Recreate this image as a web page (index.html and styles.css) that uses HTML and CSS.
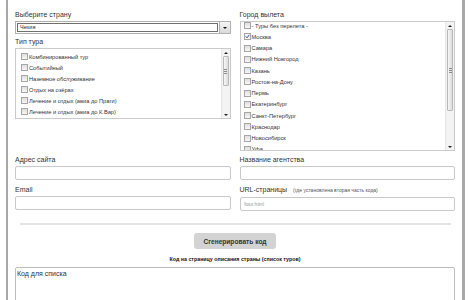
FILE: index.html
```html
<!DOCTYPE html>
<html lang="ru">
<head>
    <meta charset="UTF-8">
    <meta name="viewport" content="width=device-width, initial-scale=1.0">
    <title>Генератор кода</title>
    <link rel="stylesheet" href="styles.css">
</head>
<body>
    <div class="page">
        <!-- Country, tour type and departure city -->
        <div class="cols">
            <div class="col">
                <div class="label">Выберите страну</div>
                <div class="select">
                    <span class="select-value">Чехия</span>
                    <span class="select-btn">
                        <svg width="4" height="2" viewBox="0 0 4 2"><path d="M0 0H4L2 2Z" fill="#111"/></svg>
                    </span>
                </div>

                <div class="label label-gap">Тип тура</div>
                <div class="listbox listbox-types">
                    <ul class="items">
                        <li><span class="cb"></span>Комбинированный тур</li>
                        <li><span class="cb"></span>Событийный</li>
                        <li><span class="cb"></span>Наземное обслуживание</li>
                        <li><span class="cb"></span>Отдых на озёрах</li>
                        <li><span class="cb"></span>Лечение и отдых (авиа до Праги)</li>
                        <li><span class="cb"></span>Лечение и отдых (авиа до К.Вар)</li>
                    </ul>
                    <div class="sb">
                        <span class="sb-btn"><svg width="4" height="2" viewBox="0 0 4 2"><path d="M0 2H4L2 0Z" fill="#222"/></svg></span>
                        <span class="sb-thumb thumb-types"><span class="grip"></span></span>
                        <span class="sb-track"></span>
                        <span class="sb-btn"><svg width="4" height="2" viewBox="0 0 4 2"><path d="M0 0H4L2 2Z" fill="#222"/></svg></span>
                    </div>
                </div>
            </div>

            <div class="col">
                <div class="label">Город вылета</div>
                <div class="listbox listbox-cities">
                    <ul class="items">
                        <li><span class="cb"></span>- Туры без перелета -</li>
                        <li><span class="cb checked"><svg width="5" height="5" viewBox="0 0 5 5"><path d="M0.8 2.4L2 3.8L4.3 0.9" fill="none" stroke="#2b4f96" stroke-width="1"/></svg></span>Москва</li>
                        <li><span class="cb"></span>Самара</li>
                        <li><span class="cb"></span>Нижний Новгород</li>
                        <li><span class="cb"></span>Казань</li>
                        <li><span class="cb"></span>Ростов-на-Дону</li>
                        <li><span class="cb"></span>Пермь</li>
                        <li><span class="cb"></span>Екатеринбург</li>
                        <li><span class="cb"></span>Санкт-Петербург</li>
                        <li><span class="cb"></span>Краснодар</li>
                        <li><span class="cb"></span>Новосибирск</li>
                        <li><span class="cb"></span>Уфа</li>
                    </ul>
                    <div class="sb">
                        <span class="sb-btn"><svg width="4" height="2" viewBox="0 0 4 2"><path d="M0 2H4L2 0Z" fill="#222"/></svg></span>
                        <span class="sb-thumb thumb-cities"><span class="grip"></span></span>
                        <span class="sb-track"></span>
                        <span class="sb-btn"><svg width="4" height="2" viewBox="0 0 4 2"><path d="M0 0H4L2 2Z" fill="#222"/></svg></span>
                    </div>
                </div>
            </div>
        </div>

        <!-- Agency details -->
        <div class="fields">
            <div class="field">
                <div class="label">Адрес сайта</div>
                <input class="input" type="text">
            </div>
            <div class="field">
                <div class="label">Название агентства</div>
                <input class="input" type="text">
            </div>
            <div class="field">
                <div class="label">Email</div>
                <input class="input" type="text">
            </div>
            <div class="field">
                <div class="label">URL-страницы <span class="note">(где установлена вторая часть кода)</span></div>
                <input class="input" type="text" placeholder="/tour.html">
            </div>
        </div>

        <hr class="sep">

        <div class="actions">
            <button class="btn">Сгенерировать код</button>
        </div>

        <div class="caption">Код на страницу описания страны (список туров)</div>
        <textarea class="code">Код для списка</textarea>
    </div>
</body>
</html>
```

FILE: styles.css
```css
html, body {
    height: 300px;
    overflow: hidden;
}

body {
    margin: 0;
    font-family: "Liberation Sans", Arial, sans-serif;
    color: #333;
    background-color: #fff;
}

.page {
    margin: 0 5px 0 6px;
    padding: 10px 7px 0 7px;
    height: 300px;
    box-sizing: border-box;
    border-left: 2px solid #a8a8a8;
    border-right: 3px solid #a8a8a8;
}

.cols {
    display: grid;
    grid-template-columns: 1fr 1fr;
    column-gap: 9px;
    align-items: start;
}

.label {
    font-size: 7px;
    line-height: 9px;
    margin-bottom: 2px;
    color: #333;
    white-space: nowrap;
}

.label-gap {
    margin-top: 3px;
}

.note {
    font-size: 5px;
    margin-left: 4px;
    color: #555;
}

/* Fake select box */
.select {
    display: flex;
    height: 13px;
    box-sizing: border-box;
    border: 1px solid #b0b0b0;
    background-color: #fff;
}

.select-value {
    flex: 1;
    margin: 1px;
    border: 1px solid #6f6f6f;
    font-size: 5.5px;
    line-height: 7px;
    padding-left: 2px;
    color: #222;
}

.select-btn {
    width: 10px;
    display: flex;
    align-items: center;
    justify-content: center;
    border-left: 1px solid #b0b0b0;
    background: linear-gradient(#f6f6f6, #d9d9d9);
}

/* List boxes with checkboxes */
.listbox {
    display: flex;
    box-sizing: border-box;
    border: 1px solid #cacaca;
    background-color: #fff;
    overflow: hidden;
}

.listbox-types {
    height: 71px;
}

.listbox-cities {
    height: 130px;
}

.items {
    flex: 1;
    list-style: none;
    margin: 0;
    padding: 0;
    font-size: 5.7px;
    color: #333;
}

.items li {
    display: flex;
    align-items: center;
    white-space: nowrap;
}

.listbox-types .items {
    padding: 2px 0 0 5px;
}

.listbox-types .items li {
    height: 11px;
}

.listbox-cities .items {
    margin-top: -2px;
    padding-left: 3px;
}

.listbox-cities .items li {
    height: 11.25px;
}

.cb {
    width: 5px;
    height: 5px;
    margin-right: 1px;
    flex: none;
    display: flex;
    border: 1px solid #a6a6a6;
    background: linear-gradient(#dedede, #f7f7f7);
}

.cb.checked {
    background: #f4f4f4;
}

/* Scrollbar */
.sb {
    width: 8px;
    display: flex;
    flex-direction: column;
    border-left: 1px solid #e6e6e6;
    background-color: #f3f3f3;
}

.sb-btn {
    height: 7px;
    display: flex;
    align-items: center;
    justify-content: center;
}

.sb-thumb {
    display: flex;
    align-items: center;
    justify-content: center;
    margin: 0 1px;
    border: 1px solid #b8b8b8;
    border-radius: 1px;
    background: linear-gradient(to right, #f7f7f7, #dcdcdc);
}

.thumb-types {
    height: 28px;
}

.thumb-cities {
    height: 80px;
}

.grip {
    width: 3px;
    height: 5px;
    background: repeating-linear-gradient(#8a8a8a 0 1px, transparent 1px 2px);
}

.sb-track {
    flex: 1;
}

/* Text fields */
.fields {
    display: grid;
    grid-template-columns: 1fr 1fr;
    column-gap: 9px;
    row-gap: 5px;
    margin-top: 4px;
}

.input {
    display: block;
    width: 100%;
    height: 14px;
    box-sizing: border-box;
    margin: 0;
    padding: 0 3px;
    border: 1px solid #c9c9c9;
    border-radius: 2px;
    font-family: inherit;
    font-size: 5px;
    color: #333;
    outline: none;
}

.input::placeholder {
    color: #999;
}

.sep {
    margin: 12px 4px 0 5px;
    height: 2px;
    border: none;
    background-color: #e4e4e4;
}

.actions {
    display: flex;
    justify-content: center;
    margin-top: 8px;
}

.btn {
    width: 82px;
    height: 16px;
    padding: 0;
    border: none;
    border-radius: 3px;
    background-color: #d3d3d3;
    font-family: inherit;
    font-size: 6.6px;
    font-weight: bold;
    color: #333;
    cursor: pointer;
}

.caption {
    margin-top: 6px;
    text-align: center;
    font-size: 5.3px;
    line-height: 9px;
    font-weight: bold;
    color: #111;
}

.code {
    display: block;
    width: 100%;
    height: 60px;
    box-sizing: border-box;
    margin-top: 3px;
    padding: 2px 1px;
    border: 1px solid #bdbdbd;
    border-radius: 2px;
    font-family: inherit;
    font-size: 7px;
    color: #333;
    resize: none;
    outline: none;
}
```
